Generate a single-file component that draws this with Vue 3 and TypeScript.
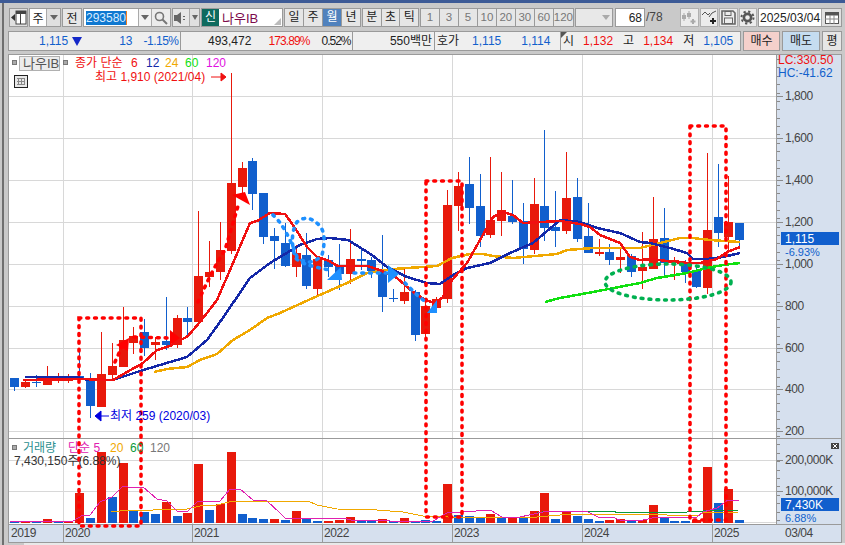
<script setup lang="ts">
import { computed } from 'vue';

// price candles in screen pixels: high, body top, body bottom, low, up?
type Candle = [number, number, number, number, 0 | 1];

const candles: Candle[] = [
    [378, 378, 387, 391, 0], [381, 382, 387, 388, 1], [375, 382, 383, 387, 0], [366, 376, 385, 385, 1],
    [373, 378, 379, 383, 1], [374, 376, 381, 383, 1], [348, 376, 380, 381, 0], [373, 381, 406, 418, 0],
    [332, 374, 407, 407, 1], [343, 366, 375, 380, 1], [307, 340, 367, 367, 1], [327, 336, 343, 354, 1],
    [319, 332, 348, 356, 0], [337, 342, 345, 360, 1], [297, 341, 345, 350, 0], [315, 318, 345, 348, 1],
    [307, 318, 322, 337, 0], [211, 276, 322, 323, 1], [241, 272, 277, 287, 1], [222, 250, 272, 280, 1],
    [73, 183, 251, 254, 1], [162, 168, 187, 193, 1], [158, 161, 194, 210, 0], [193, 193, 237, 244, 0],
    [228, 236, 241, 269, 0], [223, 243, 266, 267, 0], [245, 253, 267, 277, 1], [233, 255, 286, 289, 0],
    [257, 259, 289, 295, 1], [255, 260, 267, 277, 0], [244, 266, 274, 290, 0], [229, 259, 274, 284, 1],
    [248, 259, 261, 270, 0], [257, 260, 271, 278, 0], [235, 272, 297, 312, 0], [289, 298, 299, 302, 0],
    [268, 292, 301, 304, 1], [290, 292, 335, 341, 0], [300, 306, 334, 340, 1], [297, 299, 308, 312, 1],
    [190, 205, 299, 303, 1], [172, 186, 206, 231, 1], [157, 184, 208, 224, 0], [174, 206, 236, 247, 0],
    [157, 220, 235, 238, 1], [172, 210, 221, 236, 1], [180, 216, 222, 224, 0], [203, 221, 249, 264, 0],
    [178, 204, 250, 254, 1], [130, 206, 228, 241, 0], [191, 227, 231, 247, 0], [152, 198, 231, 234, 1],
    [178, 197, 239, 242, 0], [203, 236, 253, 253, 0], [239, 252, 254, 256, 1], [244, 252, 260, 265, 0],
    [247, 257, 260, 273, 1], [254, 256, 272, 277, 0], [232, 267, 271, 289, 1], [197, 239, 269, 269, 1],
    [208, 238, 263, 278, 0], [257, 260, 263, 280, 1], [260, 263, 272, 283, 0], [267, 271, 287, 288, 0],
    [153, 230, 288, 294, 1], [164, 217, 233, 247, 0], [176, 222, 237, 250, 1], [223, 223, 240, 248, 0],
];

// volume bar heights with up flag
const volumes: [number, 0 | 1][] = [
    [2, 0], [2, 1], [2, 0], [4, 1], [2, 0], [2, 1], [30, 1], [5, 0], [71, 1], [26, 0], [60, 1], [13, 0],
    [11, 0], [9, 0], [21, 1], [7, 0], [10, 1], [59, 1], [13, 0], [19, 1], [71, 1], [9, 0], [5, 0], [4, 0],
    [4, 1], [3, 0], [12, 1], [4, 0], [2, 0], [2, 1], [3, 1], [6, 1], [2, 0], [2, 0], [4, 1], [2, 0],
    [5, 1], [2, 0], [3, 0], [2, 0], [39, 1], [8, 0], [7, 0], [5, 0], [9, 1], [5, 0], [5, 1], [5, 0],
    [12, 1], [30, 1], [4, 0], [12, 1], [7, 0], [4, 0], [2, 0], [3, 1], [4, 1], [3, 0], [3, 1], [18, 1],
    [5, 0], [2, 0], [2, 0], [3, 1], [56, 1], [20, 0], [34, 1], [3, 0],
];

const barX = (i: number) => Math.round(14.3 + 10.82 * i);

const ma6 = '23,380 80,379 113,380 127,372 143,363 157,350 170,346 188,336 200,322 217,300 230,270 250,223 257,221 270,213 285,214 293,225 307,247 317,257 327,260 338,266 367,266 380,270 397,278 413,292 425,300 435,303 443,297 452,280 467,263 480,240 493,217 503,212 513,215 523,223 560,221 580,224 590,227 600,235 620,243 630,257 640,260 653,259 673,262 690,263 700,263 717,259 727,252 740,247';
const ma12 = '25,377 78,377 87,380 113,380 140,371 187,357 207,340 220,322 233,303 250,278 270,263 280,257 300,245 317,239 330,238 348,240 372,255 387,267 407,277 427,283 440,284 453,275 467,268 490,263 510,253 533,243 560,220 580,222 597,228 620,233 640,242 650,243 670,248 687,253 693,259 707,259 723,257 740,253';
const ma24 = '154,372 167,369 187,367 200,360 217,354 233,340 250,330 267,318 280,313 313,298 347,283 367,273 393,269 437,266 452,258 470,254 483,254 493,256 513,258 557,254 567,250 593,248 640,248 660,243 680,238 693,238 710,240 740,242';
const ma60 = '545,302 560,298 593,292 640,283 657,278 687,273 707,268 723,265 740,263';

const volMa5 = '10,521 73,521 83,515 90,515 100,502 112,497 123,486 133,488 143,487 157,499 167,501 177,511 187,512 197,502 220,501 230,489 240,489 253,500 267,501 280,513 285,518 343,518 355,521 377,520 390,521 433,521 447,513 463,512 490,510 502,517 520,517 543,512 560,511 582,511 588,512 598,517 612,517 620,520 643,520 657,517 697,517 703,512 717,508 728,500 739,500';
const volMa20 = '111,512 120,511 187,509 200,506 217,505 233,501 280,501 308,501 317,505 337,509 377,510 403,512 423,516 448,517 537,517 560,515 590,514 647,514 667,515 697,516 703,513 739,512';
const volMa60 = '537,513 547,511 615,511 615,512 687,512 703,511 739,510';

const priceTicks = [1800, 1600, 1400, 1200, 1000, 800, 600, 400, 200];
const priceY = (p: number) => Math.round(431.3 - (p - 200) * 0.2094);
const fmt = (n: number) => n.toLocaleString('en-US');

const hLines = computed(() => priceTicks.map(priceY));
const minorTicks = computed(() => {
    const out: number[] = [];
    for (let y = 54 + 5; y < 523; y += 8.38) out.push(Math.round(y));
    return out;
});

const years = [
    { x: 63, label: '2020' }, { x: 192, label: '2021' }, { x: 322, label: '2022' },
    { x: 452, label: '2023' }, { x: 582, label: '2024' }, { x: 712, label: '2025' },
];

const periods = ['1', '3', '5', '10', '20', '30', '60', '120'];
</script>

<template>
    <div class="screen">
        <div class="title-strip"></div>

        <div class="toolbar">
            <div class="btn icon-btn">
                <svg width="16" height="15" viewBox="0 0 16 15">
                    <rect x="5" y="1" width="10" height="13" fill="#fff" stroke="#444" />
                    <rect x="5" y="1" width="10" height="3" fill="#444" />
                    <rect x="9" y="4" width="1" height="10" fill="#444" />
                    <path d="M4 4 L0 7.5 L4 11 Z" fill="#333" />
                </svg>
            </div>
            <div class="combo combo-market">
                <span class="combo-text">주</span>
                <span class="arrow-btn"><i class="tri"></i></span>
            </div>
            <div class="btn wide">전</div>
            <div class="combo combo-code">
                <span class="code-text"><span class="selected">293580</span><i class="caret"></i></span>
                <span class="arrow-btn arrow-plain"><i class="tri"></i></span>
                <span class="search-btn">
                    <svg width="14" height="14" viewBox="0 0 14 14">
                        <circle cx="5.5" cy="5.5" r="4" fill="none" stroke="#777" stroke-width="1.6" />
                        <path d="M8.5 8.5 L13 13" stroke="#777" stroke-width="2" />
                    </svg>
                </span>
            </div>
            <div class="combo combo-sound">
                <span class="sound-btn">
                    <svg width="16" height="14" viewBox="0 0 16 14">
                        <path d="M1 4 H4 L8 1 V13 L4 10 H1 Z" fill="#666" />
                        <path d="M10 5 h2 v1 h-2 z M10 8 h2 v1 h-2 z" fill="#666" />
                    </svg>
                </span>
                <span class="arrow-btn arrow-small"><i class="tri"></i></span>
            </div>
            <div class="combo combo-name">
                <span class="badge-new">신</span>
                <span class="name-text">나우IB</span>
                <i class="corner"></i>
            </div>
            <div class="group group-cycle">
                <span class="seg">일</span><span class="seg">주</span><span class="seg active">월</span><span class="seg">년</span>
            </div>
            <div class="group group-tick">
                <span class="seg">분</span><span class="seg">초</span><span class="seg">틱</span>
            </div>
            <div class="group group-periods">
                <span v-for="p in periods" :key="p" class="seg seg-period">{{ p }}</span>
            </div>
            <div class="combo combo-disabled">
                <span class="arrow-plain-end"><i class="tri tri-light"></i></span>
            </div>
            <div class="count-box">68</div>
            <span class="count-total">/78</span>
            <div class="tool-icons">
                <span class="tool">
                    <svg width="16" height="15" viewBox="0 0 16 15">
                        <path d="M3 3 v8 M8 1 v8" stroke="#aaa" />
                        <rect x="1" y="5" width="4" height="4" fill="#aaa" />
                        <rect x="6" y="3" width="4" height="4" fill="#aaa" />
                        <path d="M12 9 v5 M9.5 11.5 h5" stroke="#aaa" stroke-width="2" />
                    </svg>
                </span>
                <span class="tool">
                    <svg width="16" height="15" viewBox="0 0 16 15">
                        <path d="M1 5 L4 2 L7 5 L9 3 M8 7 L11 3 L15 1" stroke="#555" fill="none" />
                        <path d="M12 8 v6 M9 11 h6" stroke="#222" stroke-width="2" />
                    </svg>
                </span>
                <span class="tool">
                    <svg width="15" height="15" viewBox="0 0 15 15">
                        <path d="M1 1 H12 L14 3 V14 H1 Z" fill="none" stroke="#666" stroke-width="1.6" />
                        <rect x="4" y="1.5" width="6" height="4" fill="none" stroke="#666" />
                        <rect x="3.5" y="8" width="8" height="5.5" fill="none" stroke="#666" />
                    </svg>
                </span>
                <span class="tool">
                    <svg width="15" height="15" viewBox="0 0 15 15">
                        <circle cx="7.5" cy="7.5" r="3.6" fill="none" stroke="#555" stroke-width="2.6" />
                        <circle cx="7.5" cy="7.5" r="6" fill="none" stroke="#555" stroke-width="2" stroke-dasharray="2.2 2.5" />
                    </svg>
                </span>
            </div>
            <div class="date-box">
                <span class="date-text">2025/03/04</span>
                <span class="cal-btn">
                    <svg width="14" height="12" viewBox="0 0 14 12">
                        <rect x="0.5" y="0.5" width="13" height="11" fill="#fff" stroke="#555" />
                        <rect x="0.5" y="0.5" width="13" height="3" fill="#555" />
                        <path d="M0 7 h14 M5 3 v9 M9 3 v9" stroke="#888" />
                    </svg>
                </span>
            </div>
        </div>

        <div class="infobar">
            <div class="info-panel">
                <div class="info-cell cell-a">
                    <span class="blue">1,115</span>
                    <i class="down-tri"></i>
                    <span class="blue diff">13</span>
                    <span class="blue rate">-1.15%</span>
                </div>
                <div class="info-cell cell-b">
                    <span class="dark">493,472</span>
                    <span class="red vol-rate">173.89%</span>
                    <span class="dark turn">0.52%</span>
                </div>
                <div class="info-cell cell-c">
                    <span class="dark">550백만</span>
                </div>
                <div class="info-cell cell-d">
                    <span class="dark">호가</span>
                    <span class="blue ask">1,115</span>
                    <span class="blue bid">1,114</span>
                </div>
                <div class="info-cell cell-e">
                    <i class="flag"></i>
                    <span class="dark">시</span><span class="red hilo">1,132</span>
                    <span class="dark lbl">고</span><span class="red hilo">1,134</span>
                    <span class="dark lbl">저</span><span class="blue hilo">1,105</span>
                </div>
            </div>
            <div class="order buy">매수</div>
            <div class="order sell">매도</div>
            <div class="order flat">평</div>
        </div>

        <svg class="chart" width="845" height="491" viewBox="0 54 845 491">
            <rect x="0" y="54" width="845" height="491" fill="#c9c9c9" />
            <rect x="2" y="54" width="2" height="491" fill="#6f6f6f" />
            <rect x="8.5" y="54.5" width="768" height="470" fill="#fff" stroke="#9a9a9a" />
            <rect x="776.5" y="54.5" width="65" height="470" fill="#d6e0ee" stroke="#9a9a9a" />
            <rect x="8.5" y="524.5" width="833" height="18" fill="#d6e0ee" stroke="#9a9a9a" />
            <rect x="24" y="543" width="821" height="2" fill="#e9e9e9" />

            <g class="crisp">
                <line v-for="y in hLines" :key="y" x1="9" x2="776" :y1="y + 0.5" :y2="y + 0.5" class="grid" />
                <line x1="9" x2="776" y1="460.5" y2="460.5" class="grid" />
                <line x1="9" x2="776" y1="491.5" y2="491.5" class="grid" />
                <line x1="9" x2="776" y1="522.5" y2="522.5" class="grid" />
                <line v-for="yr in years" :key="yr.label" :x1="yr.x + 0.5" :x2="yr.x + 0.5" y1="55" y2="524" class="grid" />
                <line x1="9" x2="841" y1="438.5" y2="438.5" class="divider" />

                <line v-for="y in minorTicks" :key="'m' + y" x1="777" x2="780" :y1="y + 0.5" :y2="y + 0.5" class="tick" />
                <line v-for="y in hLines" :key="'t' + y" x1="777" x2="783" :y1="y + 0.5" :y2="y + 0.5" class="tick" />
                <line x1="777" x2="783" y1="460.5" y2="460.5" class="tick" />
                <line x1="777" x2="783" y1="491.5" y2="491.5" class="tick" />
                <line v-for="yr in years" :key="'s' + yr.label" :x1="yr.x + 0.5" :x2="yr.x + 0.5" y1="525" y2="542" class="divider" />

                <!-- volume -->
                <rect v-for="(v, i) in volumes" :key="'v' + i" :x="barX(i) - 4.5" :y="523 - v[0]" width="9" :height="v[0]"
                    :fill="v[1] ? '#e8190b' : '#115fcd'" />
                <polyline :points="volMa20" class="vline" stroke="#f0a800" />
                <polyline :points="volMa60" class="vline" stroke="#0a9a3a" />
                <polyline :points="volMa5" class="vline" stroke="#e020b0" />

                <!-- candles -->
                <g v-for="(c, i) in candles" :key="'c' + i" :fill="c[4] ? '#e8190b' : '#115fcd'">
                    <rect :x="barX(i)" :y="c[0]" width="1" :height="c[3] - c[0]" />
                    <rect :x="barX(i) - 4.5" :y="c[1]" width="9" :height="c[2] - c[1]" />
                </g>
                <polyline :points="ma24" class="mline" stroke="#f0a800" />
                <polyline :points="ma60" class="mline" stroke="#10e010" />
                <polyline :points="ma12" class="mline" stroke="#1428a8" />
                <polyline :points="ma6" class="mline" stroke="#f01010" />
            </g>

            <!-- hand drawn annotations -->
            <g class="marks">
                <rect x="79" y="318" width="62" height="208" class="dots red-dots" />
                <rect x="426" y="181" width="36" height="336" class="dots red-dots" />
                <rect x="690" y="126" width="36" height="394" class="dots red-dots" />
                <ellipse cx="668" cy="282" rx="63" ry="18" class="dots green-dots" />

                <path d="M115 362 L124 342 M134 337 L168 338" class="dots red-dots" />
                <path d="M116 345 L129 338 L128 351 Z" fill="#ff0000" />
                <path d="M170 330 L180 338 L170 345 Z" fill="#ff0000" />
                <path d="M198 302 Q212 270 225 250 L238 206" class="dots red-dots" />
                <path d="M232 195 L245 192 L250 205 Z" fill="#ff0000" />

                <path d="M273 215 Q285 225 297 257 Q310 268 322 255 Q327 235 320 226 Q308 213 297 222 Q289 235 295 257 Q300 265 330 270" class="dots blue-dots" />
                <path d="M327 280 L342 280 L341 267 Z" fill="#1e90ff" />
                <path d="M354 273 L387 273" class="dots blue-dots" />
                <path d="M388 265 L388 283 L399 274 Z" fill="#1e90ff" />
                <path d="M405 283 L417 295 L427 303" class="dots blue-dots" />
                <path d="M427 313 L437 313 L437 300 Z" fill="#1e90ff" />
            </g>

            <!-- legends -->
            <rect x="12.5" y="60.5" width="4" height="4" class="sq" />
            <rect x="19.5" y="56.5" width="40" height="14" fill="#ececec" stroke="#b0b0b0" />
            <text x="23" y="68" class="txt big" fill="#555">나우IB</text>
            <rect x="63.5" y="60.5" width="4" height="4" class="sq" />
            <text x="75" y="67" class="txt" fill="#f01010">종가 단순</text>
            <text x="131" y="67" class="txt" fill="#f01010">6</text>
            <text x="146" y="67" class="txt" fill="#1428a8">12</text>
            <text x="165" y="67" class="txt" fill="#f0a800">24</text>
            <text x="185" y="67" class="txt" fill="#10e010">60</text>
            <text x="206" y="67" class="txt" fill="#e010e0">120</text>
            <text x="95" y="81" class="txt" fill="#f01010">최고 1,910 (2021/04)</text>
            <path d="M211 77 H221 M221 73 L226 77 L221 81 Z" stroke="#f01010" fill="#f01010" />
            <g class="crisp">
                <rect x="14.5" y="75.5" width="13" height="12" fill="#e8e8e8" stroke="#222" />
                <path d="M17 78.5 H25 M17 81.5 H25 M17 84.5 H25 M18.5 78 V85 M21.5 78 V85 M24.5 78 V85" stroke="#888" fill="none" />
            </g>

            <path d="M109 416 H96 M101 411 L95 416 L101 421 Z" stroke="#0000e0" fill="#0000e0" />
            <text x="110" y="420" class="txt" fill="#0000e0">최저 259 (2020/03)</text>

            <rect x="12.5" y="445.5" width="4" height="4" class="sq" />
            <text x="23" y="452" class="txt" fill="#2a8f8f">거래량</text>
            <text x="68" y="452" class="txt" fill="#e020b0">단순 5</text>
            <text x="110" y="452" class="txt" fill="#f0a800">20</text>
            <text x="130" y="452" class="txt" fill="#0a9a3a">60</text>
            <text x="150" y="452" class="txt" fill="#777">120</text>
            <text x="14" y="465" class="txt" fill="#333">7,430,150주(6.88%)</text>

            <!-- axis labels -->
            <text x="778" y="64" class="txt" fill="#f01010">LC:330.50</text>
            <text x="778" y="77" class="txt" fill="#1160cc">HC:-41.62</text>
            <text v-for="p in priceTicks" :key="'p' + p" x="785" :y="priceY(p) + 4" class="txt axis">{{ fmt(p) }}</text>
            <text x="785" y="464" class="txt axis">200,000K</text>
            <text x="785" y="495" class="txt axis">100,000K</text>

            <rect x="781" y="232" width="58" height="13" fill="#115fcd" />
            <text x="785" y="243" class="txt" fill="#fff">1,115</text>
            <text x="785" y="256" class="txt small" fill="#1160cc">-6.93%</text>
            <rect x="781" y="498" width="58" height="13" fill="#115fcd" />
            <text x="785" y="508.5" class="txt" fill="#fff">7,430K</text>
            <text x="785" y="521.5" class="txt small" fill="#1160cc">6.88%</text>

            <rect x="831" y="443" width="8" height="6" fill="#444" />
            <path d="M833 444 L837 448 M837 444 L833 448" stroke="#fff" />

            <text x="11" y="537" class="txt axis">2019</text>
            <text v-for="yr in years" :key="'l' + yr.label" :x="yr.x + 2" y="537" class="txt axis">{{ yr.label }}</text>
            <text x="785" y="537" class="txt axis">03/04</text>
        </svg>
    </div>
</template>

<style>
html,
body {
    margin: 0;
    background: #c9c9c9;
}
</style>

<style scoped>
.screen {
    width: 845px;
    height: 545px;
    overflow: hidden;
    background: linear-gradient(#6f6f6f, #6f6f6f) 2px 0 / 2px 100% no-repeat, #c9c9c9;
    font-family: "Liberation Sans", "Noto Sans CJK KR", sans-serif;
    font-size: 12px;
    color: #222;
    display: flex;
    flex-direction: column;
}

.title-strip {
    height: 3px;
    background: #3c5a96;
}

.toolbar {
    display: flex;
    align-items: stretch;
    gap: 1px;
    height: 19px;
    margin: 5px 0 0 9px;
}

.btn,
.combo,
.group,
.count-box,
.date-box {
    box-sizing: border-box;
    border: 1px solid #9a9a9a;
    background: #e6e6e6;
    display: flex;
    align-items: center;
    flex: none;
}

.icon-btn {
    width: 19px;
    justify-content: center;
    background: #e0e0e0;
}

.wide {
    width: 20px;
    justify-content: center;
}

.combo-market {
    width: 32px;
    background: #fff;
}

.combo-text {
    flex: 1;
    text-align: center;
}

.arrow-btn {
    width: 13px;
    align-self: stretch;
    background: #e0e0e0;
    border-left: 1px solid #aaa;
    display: flex;
    align-items: center;
    justify-content: center;
}

.arrow-plain {
    background: #f2f2f2;
    width: 12px;
}

.arrow-small {
    width: 9px;
}

.tri {
    width: 0;
    height: 0;
    border-left: 4px solid transparent;
    border-right: 4px solid transparent;
    border-top: 5px solid #666;
}

.arrow-small .tri {
    border-left-width: 3px;
    border-right-width: 3px;
}

.tri-light {
    border-top-color: #aaa;
}

.combo-code {
    width: 88px;
    background: #fff;
}

.code-text {
    flex: 1;
    padding-left: 2px;
    font-size: 12px;
    display: flex;
    align-items: center;
}

.selected {
    background: #0f78d0;
    color: #d8ecff;
    line-height: 14px;
}

.caret {
    width: 1px;
    height: 14px;
    background: #f08020;
}

.search-btn {
    width: 18px;
    align-self: stretch;
    background: #ececec;
    border-left: 1px solid #aaa;
    display: flex;
    align-items: center;
    justify-content: center;
}

.combo-sound {
    width: 28px;
}

.sound-btn {
    flex: 1;
    display: flex;
    justify-content: center;
}

.combo-name {
    width: 82px;
    background: #fff;
    position: relative;
    gap: 3px;
}

.badge-new {
    width: 17px;
    align-self: stretch;
    background: #0e6a5e;
    color: #fff;
    text-align: center;
    line-height: 17px;
}

.name-text {
    color: #7d0a4c;
    font-size: 13px;
}

.corner {
    position: absolute;
    right: 1px;
    bottom: 1px;
    width: 0;
    height: 0;
    border-left: 7px solid transparent;
    border-bottom: 7px solid #bbb;
}

.group {
    align-items: stretch;
    background: #9a9a9a;
    gap: 1px;
}

.group-cycle {
    width: 77px;
}

.group-tick {
    width: 57px;
}

.group-periods {
    width: 154px;
}

.seg {
    flex: 1 1 0;
    background: #e6e6e6;
    text-align: center;
    line-height: 17px;
}

.seg.active {
    background: #4f81bd;
    color: #fff;
}

.seg-period {
    color: #777;
    font-size: 11.5px;
}

.combo-disabled {
    width: 38px;
    justify-content: flex-end;
    background: #e8e8e8;
}

.arrow-plain-end {
    width: 13px;
    display: flex;
    justify-content: center;
}

.count-box {
    width: 30px;
    margin-left: 1px;
    background: #fff;
    justify-content: flex-end;
    padding-right: 2px;
}

.count-total {
    width: 34px;
    line-height: 19px;
    color: #444;
    flex: none;
}

.tool-icons {
    display: flex;
    gap: 1px;
    flex: none;
    margin-left: -1px;
}

.tool {
    box-sizing: border-box;
    width: 18.5px;
    border: 1px solid #b0b0b0;
    background: #ececec;
    display: flex;
    align-items: center;
    justify-content: center;
}

.date-box {
    width: 84px;
    background: #fff;
}

.date-text {
    flex: 1;
    padding-left: 1px;
    font-size: 12px;
    white-space: nowrap;
}

.cal-btn {
    width: 19px;
    flex: none;
    align-self: stretch;
    background: #e0e0e0;
    border-left: 1px solid #aaa;
    display: flex;
    align-items: center;
    justify-content: center;
}

.infobar {
    display: flex;
    align-items: stretch;
    gap: 2px;
    height: 20px;
    margin: 4px 0 3px 8px;
}

.info-panel {
    box-sizing: border-box;
    width: 733px;
    display: flex;
    border: 1px solid #9a9a9a;
    background: #efefef;
    line-height: 18px;
}

.info-cell {
    box-sizing: border-box;
    border-right: 1px solid #9a9a9a;
    flex: none;
    white-space: nowrap;
    display: flex;
}

.cell-a {
    width: 172px;
    padding-left: 30px;
    align-items: center;
}

.down-tri {
    width: 0;
    height: 0;
    margin-left: 4px;
    border-left: 5px solid transparent;
    border-right: 5px solid transparent;
    border-top: 9px solid #1428c8;
}

.diff {
    margin-left: 37px;
}

.rate {
    margin-left: 11px;
    letter-spacing: -0.5px;
}

.cell-b {
    width: 172px;
    padding-left: 27px;
}

.vol-rate {
    margin-left: 17px;
    letter-spacing: -0.9px;
}

.turn {
    margin-left: 12px;
    letter-spacing: -1px;
}

.cell-c {
    width: 82px;
    justify-content: flex-end;
    padding-right: 2px;
}

.cell-d {
    width: 126px;
    padding-left: 2px;
}

.ask {
    margin-left: 13px;
}

.bid {
    margin-left: 20px;
}

.cell-e {
    flex: 1;
    border-right: 0;
    padding-left: 2px;
    position: relative;
}

.flag {
    position: absolute;
    left: 0;
    top: 0;
    width: 0;
    height: 0;
    border-top: 6px solid #555;
    border-right: 6px solid transparent;
}

.hilo {
    margin-left: 9px;
}

.lbl {
    margin-left: 10px;
}

.blue {
    color: #1160cc;
}

.red {
    color: #f01010;
}

.dark {
    color: #222;
}

.order {
    box-sizing: border-box;
    border: 1px solid #9a9a9a;
    text-align: center;
    line-height: 18px;
    flex: none;
}

.buy {
    width: 37px;
    background: #f4d0cb;
}

.sell {
    width: 38px;
    background: #c5dcf0;
}

.flat {
    width: 20px;
    background: #e6e6e6;
}

.chart {
    display: block;
    flex: none;
}

.crisp {
    shape-rendering: crispEdges;
}

.grid {
    stroke: #d8d8d8;
}

.divider {
    stroke: #9a9a9a;
}

.tick {
    stroke: #8a8a8a;
}

.mline {
    fill: none;
    stroke-width: 2.5;
}

.vline {
    fill: none;
    stroke-width: 1;
}

.dots {
    fill: none;
    stroke-width: 3.6;
    stroke-linecap: round;
    stroke-dasharray: 1.8 6;
}

.red-dots {
    stroke: #ff0000;
}

.green-dots {
    stroke: #00b050;
}

.blue-dots {
    stroke: #1e90ff;
}

.sq {
    fill: #aaa;
    stroke: #777;
}

.txt {
    font-family: "Liberation Sans", "Noto Sans CJK KR", sans-serif;
    font-size: 12px;
}

.big {
    font-size: 13px;
}

.small {
    font-size: 11px;
}

.axis {
    fill: #444;
    letter-spacing: -0.45px;
}
</style>
